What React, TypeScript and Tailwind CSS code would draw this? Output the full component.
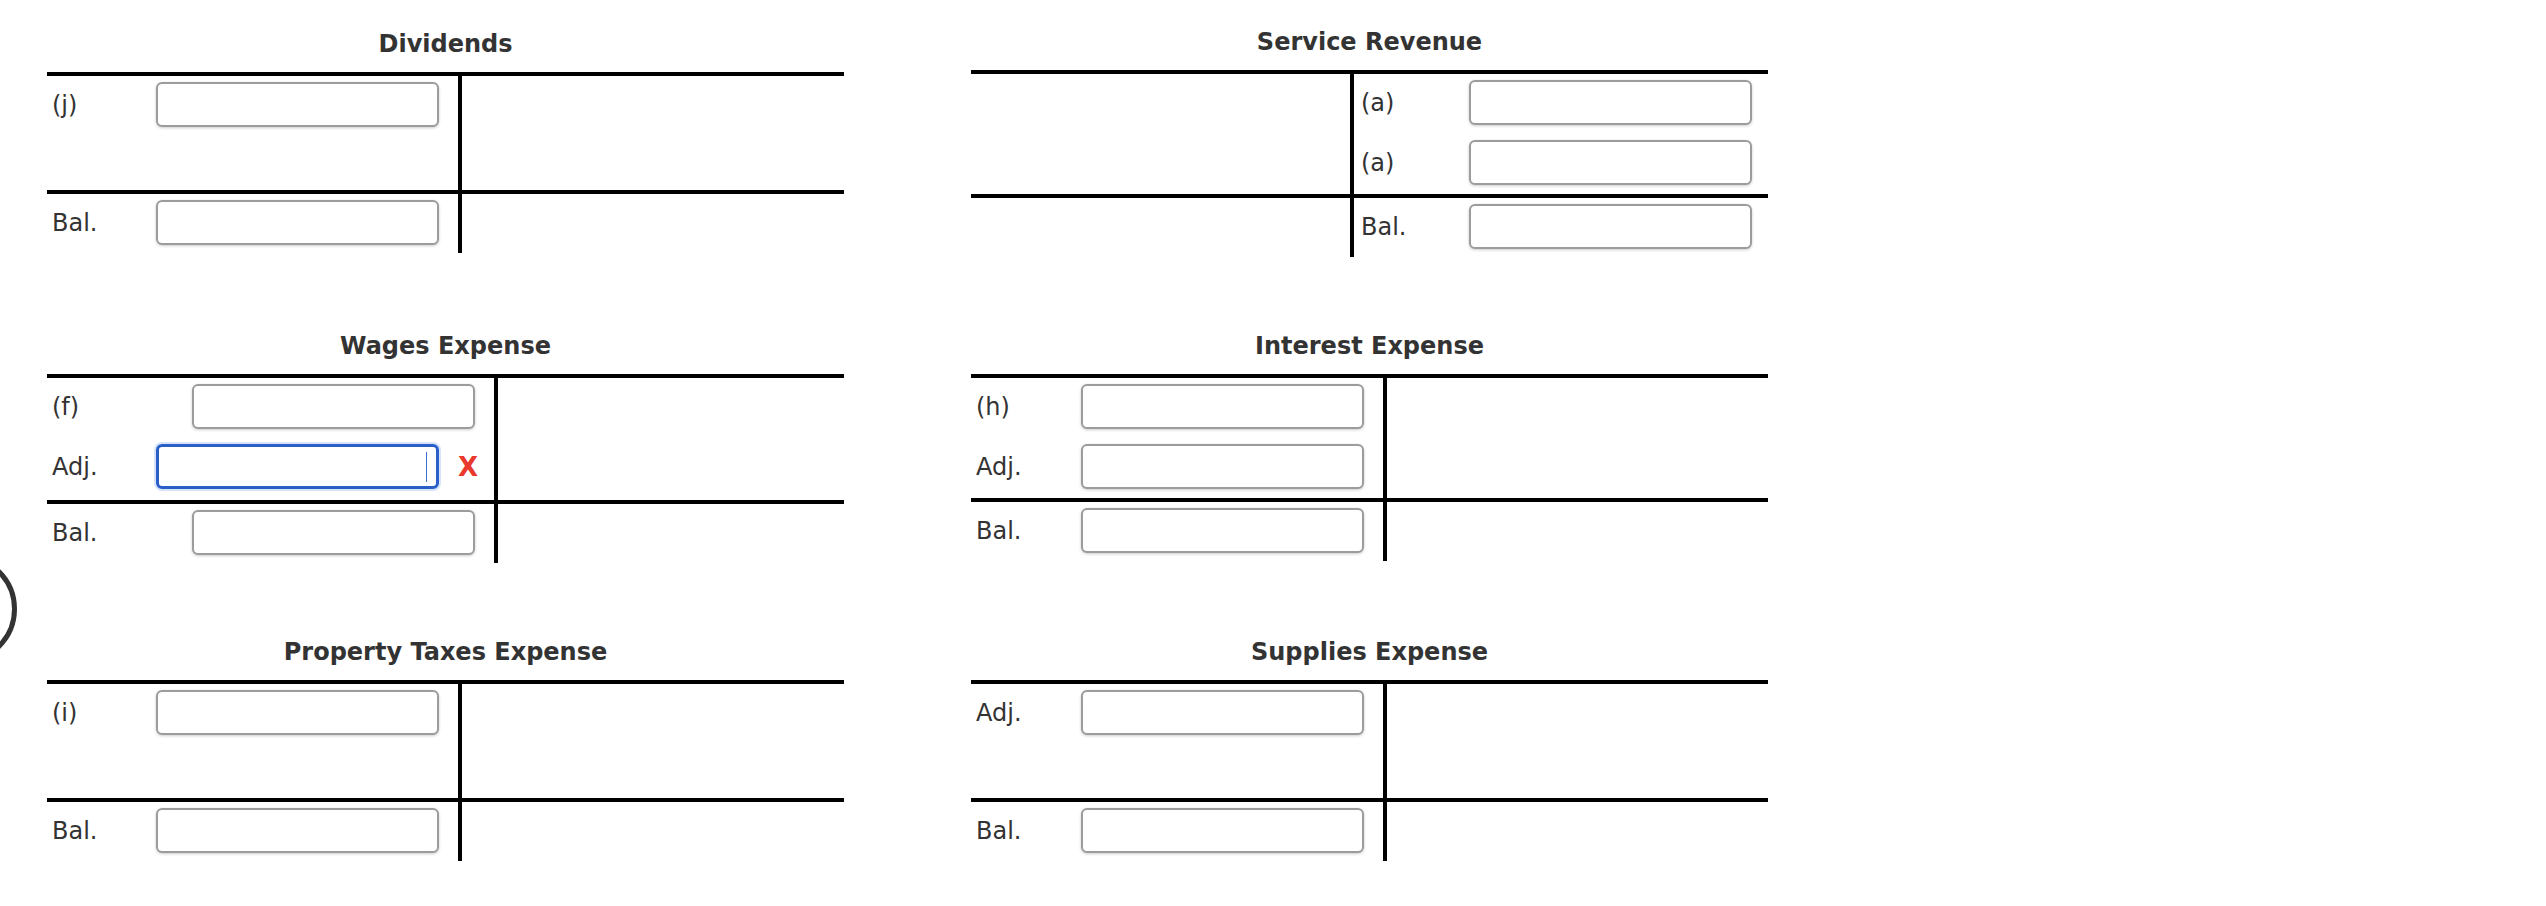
import React from 'react';

type Entry = { label: string; focused?: boolean } | null;

type Account = {
    title: string;
    leftW: number;
    left: Entry[];
    right: Entry[];
    balSide: 'debit' | 'credit';
    lift?: boolean;
};

const accounts: Account[] = [
    { title: 'Dividends', leftW: 415, left: [{ label: '(j)' }, null], right: [], balSide: 'debit' },
    { title: 'Service Revenue', leftW: 383, left: [], right: [{ label: '(a)' }, { label: '(a)' }], balSide: 'credit', lift: true },
    { title: 'Wages Expense', leftW: 451, left: [{ label: '(f)' }, { label: 'Adj.', focused: true }], right: [], balSide: 'debit' },
    { title: 'Interest Expense', leftW: 416, left: [{ label: '(h)' }, { label: 'Adj.' }], right: [], balSide: 'debit' },
    { title: 'Property Taxes Expense', leftW: 415, left: [{ label: '(i)' }, null], right: [], balSide: 'debit' },
    { title: 'Supplies Expense', leftW: 416, left: [{ label: 'Adj.' }, null], right: [], balSide: 'debit' },
];

const Field = ({ focused }: { focused?: boolean }) => {
    if (focused) {
        return (
            <div className="relative">
                <input
                    type="text"
                    readOnly
                    className="block w-[283px] h-[45px] rounded-[6px] border-[3px] border-[#2b5fc8] bg-white shadow-[0_0_0_2px_#d6e4fb] outline-none"
                />
                <span className="absolute right-[12px] top-[8px] w-px h-[30px] bg-[#3a6fcf]" />
            </div>
        );
    }
    return (
        <input
            type="text"
            readOnly
            className="block w-[283px] h-[45px] rounded-[6px] border-2 border-[#9c9c9c] bg-white shadow-[0_1px_3px_rgba(0,0,0,0.2)] outline-none"
        />
    );
};

const DebitRow = ({ entry, tall }: { entry: Entry; tall?: boolean }) => {
    if (!entry) return <div className="h-[54px]" />;
    return (
        <div className={`flex pt-[6px] ${tall ? 'h-[62px]' : 'h-[60px]'}`}>
            <div className="w-[109px] pl-[5px] h-[45px] flex items-center shrink-0">{entry.label}</div>
            <div className="flex-1 flex justify-end items-center h-[45px] pr-[19px]">
                <Field focused={entry.focused} />
                {entry.focused && (
                    <span className="ml-[19px] text-[26px] leading-none font-bold text-[#e8392c]">X</span>
                )}
            </div>
        </div>
    );
};

const CreditRow = ({ entry }: { entry: Entry }) => {
    if (!entry) return <div className="h-[54px]" />;
    return (
        <div className="flex h-[60px] pt-[6px]">
            <div className="w-[115px] pl-[7px] h-[45px] flex items-center shrink-0">{entry.label}</div>
            <Field focused={entry.focused} />
        </div>
    );
};

const TAccount = ({ acc }: { acc: Account }) => {
    return (
        <div className={acc.lift ? '-mt-[2px]' : ''}>
            <div className="text-[24px] leading-[28px] font-bold text-center text-[#333] mb-[14px]">{acc.title}</div>
            <div className="border-t-4 border-black">
                <div className="flex">
                    <div className="border-r-4 border-black shrink-0" style={{ width: acc.leftW }}>
                        {acc.left.map((e, i) => (
                            <DebitRow key={i} entry={e} tall={!!e?.focused} />
                        ))}
                    </div>
                    <div className="flex-1">
                        {acc.right.map((e, i) => (
                            <CreditRow key={i} entry={e} />
                        ))}
                    </div>
                </div>
                {/* balance row, 4px rule + 59px */}
                <div className="flex border-t-4 border-black h-[63px]">
                    <div className="border-r-4 border-black shrink-0" style={{ width: acc.leftW }}>
                        {acc.balSide === 'debit' && <DebitRow entry={{ label: 'Bal.' }} />}
                    </div>
                    <div className="flex-1">
                        {acc.balSide === 'credit' && <CreditRow entry={{ label: 'Bal.' }} />}
                    </div>
                </div>
            </div>
        </div>
    );
};

export default function App() {
    return (
        <div className="relative min-h-screen w-full overflow-hidden bg-white text-[24px] leading-[28px] text-[#333] font-['DejaVu_Sans','Verdana',sans-serif]">
            <div className="pt-[30px] pl-[47px] grid grid-cols-[797px_797px] gap-x-[127px] gap-y-[75px] items-start">
                {accounts.map((acc) => (
                    <TAccount key={acc.title} acc={acc} />
                ))}
            </div>
            {/* floating round button, mostly off screen */}
            <div className="absolute left-[-93px] top-[554px] w-[110px] h-[110px] rounded-full border-[5px] border-[#333]" />
        </div>
    );
}
